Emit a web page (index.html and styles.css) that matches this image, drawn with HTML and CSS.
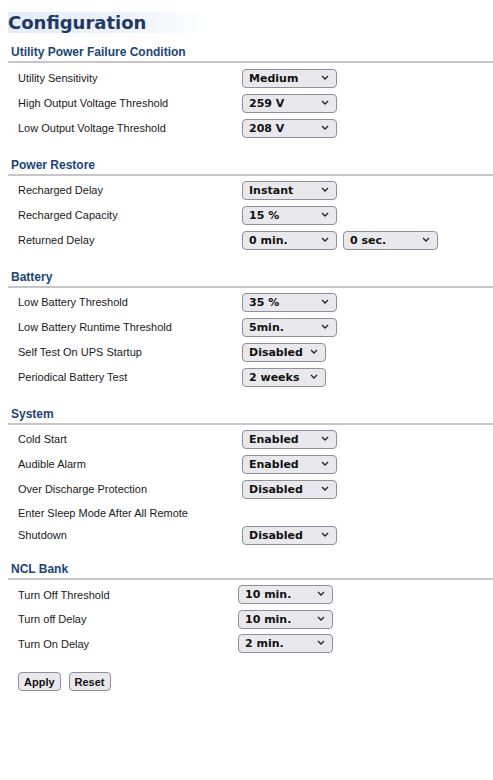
FILE: index.html
```html
<!DOCTYPE html>
<html>
<head>
<meta charset="utf-8">
<link rel="stylesheet" href="styles.css">
</head>
<body>
<h1 class="title">Configuration</h1>

<section class="sec">
  <h2 class="sec-head">Utility Power Failure Condition</h2>
  <div class="rows">
    <div class="row"><span class="lbl">Utility Sensitivity</span><span class="ctl"><span class="sel"><select><option>Medium</option></select><svg class="chev" width="8" height="5" viewBox="0 0 8 5"><path d="M1 1 L4 4 L7 1" fill="none" stroke="#222" stroke-width="1.3"/></svg></span></span></div>
    <div class="row"><span class="lbl">High Output Voltage Threshold</span><span class="ctl"><span class="sel"><select><option>259 V</option></select><svg class="chev" width="8" height="5" viewBox="0 0 8 5"><path d="M1 1 L4 4 L7 1" fill="none" stroke="#222" stroke-width="1.3"/></svg></span></span></div>
    <div class="row"><span class="lbl">Low Output Voltage Threshold</span><span class="ctl"><span class="sel"><select><option>208 V</option></select><svg class="chev" width="8" height="5" viewBox="0 0 8 5"><path d="M1 1 L4 4 L7 1" fill="none" stroke="#222" stroke-width="1.3"/></svg></span></span></div>
  </div>
</section>

<section class="sec">
  <h2 class="sec-head">Power Restore</h2>
  <div class="rows">
    <div class="row"><span class="lbl">Recharged Delay</span><span class="ctl"><span class="sel"><select><option>Instant</option></select><svg class="chev" width="8" height="5" viewBox="0 0 8 5"><path d="M1 1 L4 4 L7 1" fill="none" stroke="#222" stroke-width="1.3"/></svg></span></span></div>
    <div class="row"><span class="lbl">Recharged Capacity</span><span class="ctl"><span class="sel"><select><option>15 %</option></select><svg class="chev" width="8" height="5" viewBox="0 0 8 5"><path d="M1 1 L4 4 L7 1" fill="none" stroke="#222" stroke-width="1.3"/></svg></span></span></div>
    <div class="row"><span class="lbl">Returned Delay</span><span class="ctl"><span class="sel"><select><option>0 min.</option></select><svg class="chev" width="8" height="5" viewBox="0 0 8 5"><path d="M1 1 L4 4 L7 1" fill="none" stroke="#222" stroke-width="1.3"/></svg></span><span class="sel"><select><option>0 sec.</option></select><svg class="chev" width="8" height="5" viewBox="0 0 8 5"><path d="M1 1 L4 4 L7 1" fill="none" stroke="#222" stroke-width="1.3"/></svg></span></span></div>
  </div>
</section>

<section class="sec">
  <h2 class="sec-head">Battery</h2>
  <div class="rows rows-tight">
    <div class="row"><span class="lbl">Low Battery Threshold</span><span class="ctl"><span class="sel"><select><option>35 %</option></select><svg class="chev" width="8" height="5" viewBox="0 0 8 5"><path d="M1 1 L4 4 L7 1" fill="none" stroke="#222" stroke-width="1.3"/></svg></span></span></div>
    <div class="row"><span class="lbl">Low Battery Runtime Threshold</span><span class="ctl"><span class="sel"><select><option>5min.</option></select><svg class="chev" width="8" height="5" viewBox="0 0 8 5"><path d="M1 1 L4 4 L7 1" fill="none" stroke="#222" stroke-width="1.3"/></svg></span></span></div>
    <div class="row"><span class="lbl">Self Test On UPS Startup</span><span class="ctl"><span class="sel sel-sm"><select><option>Disabled</option></select><svg class="chev" width="8" height="5" viewBox="0 0 8 5"><path d="M1 1 L4 4 L7 1" fill="none" stroke="#222" stroke-width="1.3"/></svg></span></span></div>
    <div class="row"><span class="lbl">Periodical Battery Test</span><span class="ctl"><span class="sel sel-sm"><select><option>2 weeks</option></select><svg class="chev" width="8" height="5" viewBox="0 0 8 5"><path d="M1 1 L4 4 L7 1" fill="none" stroke="#222" stroke-width="1.3"/></svg></span></span></div>
  </div>
</section>

<section class="sec">
  <h2 class="sec-head">System</h2>
  <div class="rows">
    <div class="row"><span class="lbl">Cold Start</span><span class="ctl"><span class="sel"><select><option>Enabled</option></select><svg class="chev" width="8" height="5" viewBox="0 0 8 5"><path d="M1 1 L4 4 L7 1" fill="none" stroke="#222" stroke-width="1.3"/></svg></span></span></div>
    <div class="row"><span class="lbl">Audible Alarm</span><span class="ctl"><span class="sel"><select><option>Enabled</option></select><svg class="chev" width="8" height="5" viewBox="0 0 8 5"><path d="M1 1 L4 4 L7 1" fill="none" stroke="#222" stroke-width="1.3"/></svg></span></span></div>
    <div class="row"><span class="lbl">Over Discharge Protection</span><span class="ctl"><span class="sel"><select><option>Disabled</option></select><svg class="chev" width="8" height="5" viewBox="0 0 8 5"><path d="M1 1 L4 4 L7 1" fill="none" stroke="#222" stroke-width="1.3"/></svg></span></span></div>
    <div class="row row-tall"><span class="lbl lbl-wrap">Enter Sleep Mode After All Remote<br>Shutdown</span><span class="ctl ctl-end"><span class="sel"><select><option>Disabled</option></select><svg class="chev" width="8" height="5" viewBox="0 0 8 5"><path d="M1 1 L4 4 L7 1" fill="none" stroke="#222" stroke-width="1.3"/></svg></span></span></div>
  </div>
</section>

<section class="sec sec-ncl">
  <h2 class="sec-head">NCL Bank</h2>
  <div class="rows rows-ncl">
    <div class="row"><span class="lbl">Turn Off Threshold</span><span class="ctl"><span class="sel"><select><option>10 min.</option></select><svg class="chev" width="8" height="5" viewBox="0 0 8 5"><path d="M1 1 L4 4 L7 1" fill="none" stroke="#222" stroke-width="1.3"/></svg></span></span></div>
    <div class="row"><span class="lbl">Turn off Delay</span><span class="ctl"><span class="sel"><select><option>10 min.</option></select><svg class="chev" width="8" height="5" viewBox="0 0 8 5"><path d="M1 1 L4 4 L7 1" fill="none" stroke="#222" stroke-width="1.3"/></svg></span></span></div>
    <div class="row"><span class="lbl">Turn On Delay</span><span class="ctl"><span class="sel"><select><option>2 min.</option></select><svg class="chev" width="8" height="5" viewBox="0 0 8 5"><path d="M1 1 L4 4 L7 1" fill="none" stroke="#222" stroke-width="1.3"/></svg></span></span></div>
  </div>
</section>

<div class="actions">
  <button class="btn">Apply</button>
  <button class="btn">Reset</button>
</div>
</body>
</html>
```

FILE: styles.css
```css
html, body {
  background: #ffffff;
}
body {
  margin: 8px 0 8px 8px;
  font-family: "Liberation Sans", Arial, sans-serif;
  color: #111;
}
.title {
  margin: 4px 0 0 0;
  width: 202px;
  height: 21px;
  line-height: 21px;
  font-family: "DejaVu Sans", sans-serif;
  font-weight: bold;
  font-size: 18px;
  color: #1f3864;
  background: linear-gradient(to right, #e3ecf7 0%, #eef3fa 60%, #ffffff 100%);
}
.sec {
  margin-top: 11px;
}
.sec + .sec {
  margin-top: 17px;
}
.sec + .sec-ncl {
  margin-top: 16px;
}
.sec-head {
  margin: 0;
  padding: 0 0 1px 3px;
  font-size: 12px;
  line-height: 16px;
  font-weight: bold;
  color: #1b4577;
  border-bottom: 2px solid #c6c6c6;
}
.rows {
  padding-top: 1.5px;
  padding-left: 10px;
  display: grid;
  grid-template-columns: 224px auto;
}
.rows-tight {
  padding-top: 0.5px;
}
.rows-ncl {
  grid-template-columns: 220px auto;
  grid-auto-rows: 24.5px;
}
.row {
  display: contents;
}
.lbl {
  box-sizing: border-box;
  height: 25px;
  padding-top: 1px;
  line-height: 24px;
  font-size: 11px;
  color: #1a1a1a;
}
.lbl-wrap {
  height: 44px;
  line-height: 22px;
}
.ctl {
  display: flex;
  align-items: center;
  gap: 6px;
  height: 25px;
}
.rows-ncl .lbl,
.rows-ncl .ctl {
  height: 24.5px;
}
.ctl-end {
  height: 44px;
  align-items: flex-end;
  padding-bottom: 1px;
  box-sizing: border-box;
}
.sel {
  position: relative;
  display: block;
  width: 95px;
  height: 19px;
}
.sel-sm {
  width: 84px;
}
.sel select {
  appearance: none;
  -webkit-appearance: none;
  box-sizing: border-box;
  width: 100%;
  height: 19px;
  margin: 0;
  padding: 0 0 0 6px;
  font-family: "DejaVu Sans", sans-serif;
  font-weight: bold;
  font-size: 11px;
  color: #111;
  background: #e9e9ed;
  border: 1px solid #8f8f9d;
  border-radius: 4px;
}
.chev {
  position: absolute;
  right: 8px;
  top: 7px;
  pointer-events: none;
}
.actions {
  display: flex;
  gap: 8px;
  margin-top: 17px;
  padding-left: 10px;
}
.btn {
  box-sizing: border-box;
  height: 19px;
  padding: 0 5px;
  font-family: "Liberation Sans", Arial, sans-serif;
  font-weight: bold;
  font-size: 11px;
  color: #111;
  background: #e9e9ed;
  border: 1px solid #8f8f9d;
  border-radius: 4px;
}
```
